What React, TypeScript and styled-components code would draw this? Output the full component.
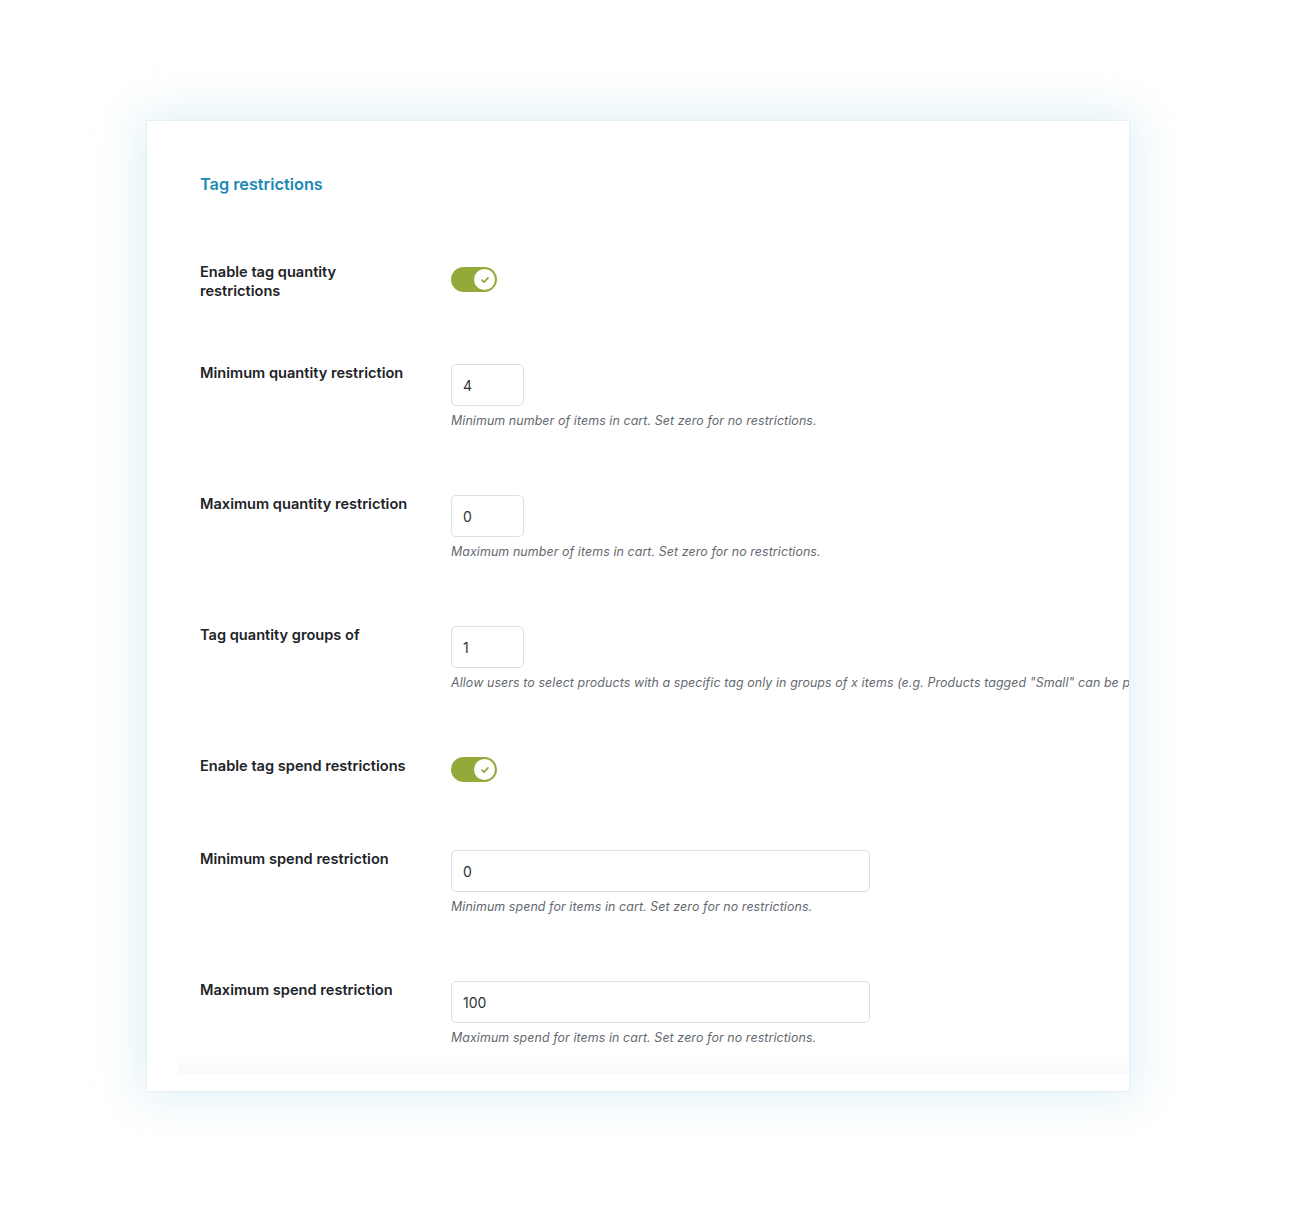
import React from 'react';
import styled, { createGlobalStyle } from 'styled-components';

const GlobalStyle = createGlobalStyle`
  html, body {
    margin: 0;
    padding: 0;
    background: #ffffff;
    font-family: Inter, "Liberation Sans", Arial, sans-serif;
  }
`;

const Page = styled.div`
  padding: 121px 0 122px 147px;
`;

const Card = styled.div`
  width: 982px;
  height: 970px;
  box-sizing: border-box;
  background: #ffffff;
  overflow: hidden;
  box-shadow: 0 0 0 1px rgba(220, 238, 244, 0.6), 0 0 40px 8px rgba(176, 218, 232, 0.38);
`;

const Panel = styled.div`
  margin: 0 2px 0 31px;
  padding: 52px 0 27px 22px;
  background: linear-gradient(to bottom, #ffffff 0, #ffffff calc(100% - 22px), #fafafa 100%);
`;

const Heading = styled.h2`
  margin: 0 0 68px;
  font-size: 16.3px;
  line-height: 22px;
  font-weight: 600;
  color: #1c88b4;
`;

const Rows = styled.div`
  display: flex;
  flex-direction: column;
`;

const Row = styled.div<{ $after: number }>`
  display: grid;
  grid-template-columns: 218px 1fr;
  column-gap: 33px;
  align-items: start;
  margin-bottom: ${(p) => p.$after}px;

  &:last-child {
    margin-bottom: 0;
  }
`;

const Label = styled.label`
  font-size: 14.6px;
  line-height: 19px;
  font-weight: 600;
  color: #1d2327;
  padding-right: 10px;
`;

const Field = styled.div`
  display: flex;
  flex-direction: column;
  align-items: flex-start;
  min-width: 0;
`;

const Input = styled.input<{ $wide?: boolean }>`
  box-sizing: border-box;
  width: ${(p) => (p.$wide ? '419px' : '73px')};
  height: 42px;
  padding: 0 11px;
  border: 1px solid #d9e0e6;
  border-radius: 5px;
  background: #ffffff;
  font-family: Inter, "Liberation Sans", Arial, sans-serif;
  font-size: 14px;
  color: #2c3338;
  outline: none;
`;

const Description = styled.p`
  margin: 6px 0 0;
  font-size: 12.4px;
  line-height: 18px;
  font-style: italic;
  color: #646970;
  white-space: nowrap;
  letter-spacing: 0.1px;
`;

const Track = styled.div<{ $offset: number }>`
  width: 46px;
  height: 25px;
  margin-top: ${(p) => p.$offset}px;
  margin-bottom: 3px;
  border-radius: 13px;
  background: #93a93a;
  position: relative;
`;

const Knob = styled.span`
  position: absolute;
  right: 2px;
  top: 2px;
  width: 21px;
  height: 21px;
  box-sizing: border-box;
  border-radius: 50%;
  background: #ffffff;
  display: flex;
  align-items: center;
  justify-content: center;
`;

const Toggle: React.FC<{ offset: number }> = ({ offset }) => (
  <Track $offset={offset}>
    <Knob>
      <svg width="10" height="10" viewBox="0 0 10 10" fill="none">
        <path d="M2 5.2 L4.1 7.2 L8 2.9" stroke="#8ea43a" strokeWidth="1.7" strokeLinecap="round" strokeLinejoin="round" />
      </svg>
    </Knob>
  </Track>
);

interface FieldRow {
  label: string;
  kind: 'toggle' | 'input';
  after: number;
  offset?: number;
  value?: string;
  wide?: boolean;
  help?: string;
}

const rows: FieldRow[] = [
  { label: 'Enable tag quantity restrictions', kind: 'toggle', offset: 4, after: 63 },
  {
    label: 'Minimum quantity restriction',
    kind: 'input',
    after: 65,
    value: '4',
    help: 'Minimum number of items in cart. Set zero for no restrictions.',
  },
  {
    label: 'Maximum quantity restriction',
    kind: 'input',
    after: 65,
    value: '0',
    help: 'Maximum number of items in cart. Set zero for no restrictions.',
  },
  {
    label: 'Tag quantity groups of',
    kind: 'input',
    after: 65,
    value: '1',
    help: 'Allow users to select products with a specific tag only in groups of x items (e.g. Products tagged "Small" can be purchased in groups of 3).',
  },
  { label: 'Enable tag spend restrictions', kind: 'toggle', offset: 0, after: 65 },
  {
    label: 'Minimum spend restriction',
    kind: 'input',
    after: 65,
    value: '0',
    wide: true,
    help: 'Minimum spend for items in cart. Set zero for no restrictions.',
  },
  {
    label: 'Maximum spend restriction',
    kind: 'input',
    after: 0,
    value: '100',
    wide: true,
    help: 'Maximum spend for items in cart. Set zero for no restrictions.',
  },
];

const App: React.FC = () => {
  return (
    <>
      <GlobalStyle />
      <Page>
        <Card>
          <Panel>
            <Heading>Tag restrictions</Heading>
            <Rows>
              {rows.map((row) => (
                <Row key={row.label} $after={row.after}>
                  <Label>{row.label}</Label>
                  <Field>
                    {row.kind === 'toggle' ? (
                      <Toggle offset={row.offset ?? 0} />
                    ) : (
                      <>
                        <Input $wide={row.wide} defaultValue={row.value} />
                        <Description>{row.help}</Description>
                      </>
                    )}
                  </Field>
                </Row>
              ))}
            </Rows>
          </Panel>
        </Card>
      </Page>
    </>
  );
};

export default App;
